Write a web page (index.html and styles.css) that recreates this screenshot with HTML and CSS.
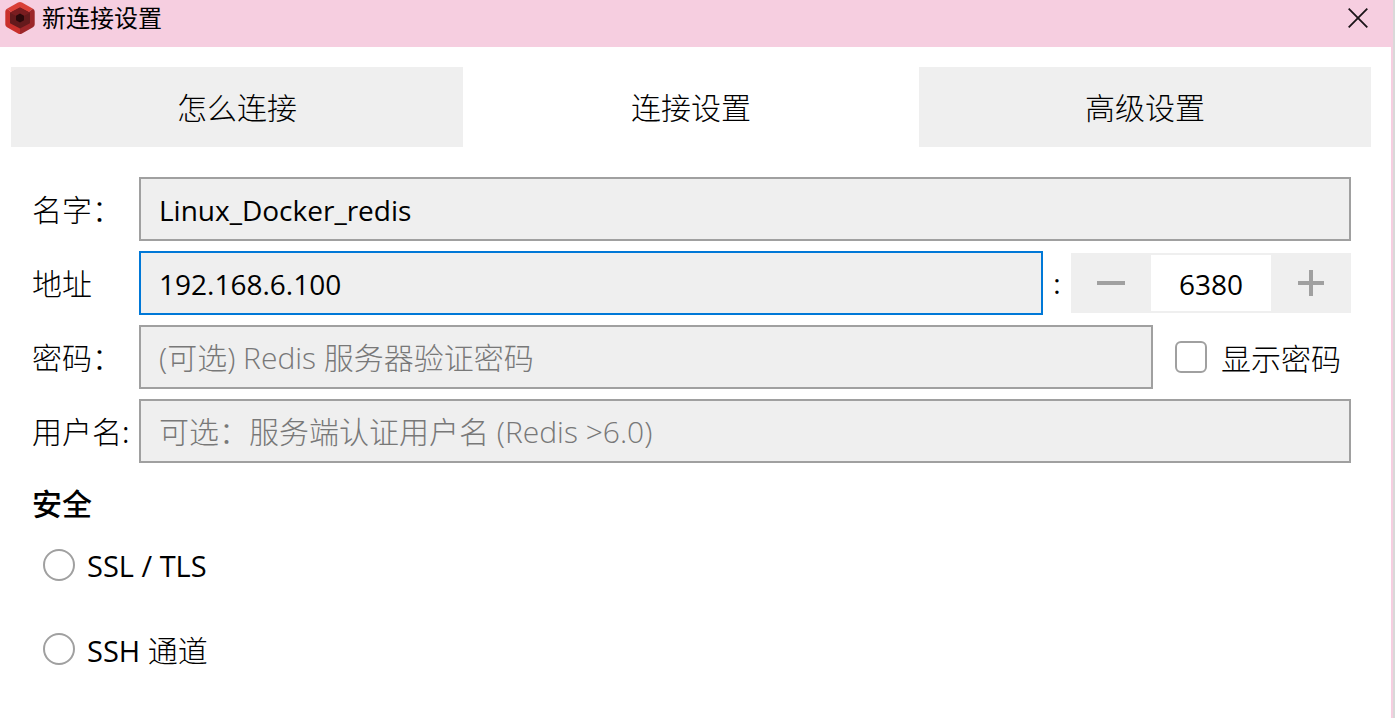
FILE: index.html
```
<!DOCTYPE html>
<html lang="zh-CN">
<head>
<meta charset="utf-8">
<title>新连接设置</title>
<link rel="stylesheet" href="styles.css">
</head>
<body>
<div class="window">
  <header class="titlebar">
    <svg class="logo" viewBox="0 0 30 32" aria-hidden="true">
      <path fill="#d93f37" d="M13 .6Q15-.4 17 .6L28 6.800 15 16 2 6.800Z"/>
      <path fill="#c9302c" d="M2 6.800Q.3 7.800.3 9.500V22.500Q.3 24.200 2 25.200L13 31.400Q14 32 15 32V16Z"/>
      <path fill="#9c2629" d="M28 6.800Q29.700 7.800 29.700 9.500V22.500Q29.700 24.200 28 25.200L17 31.400Q16 32 15 32V16Z"/>
      <path fill="#641a1c" d="M15 5.500 25 10.800V21.200L15 26.500 5 21.200V10.800Z"/>
      <path fill="#7a1d20" d="M15 5.500 25 10.800 15 16 5 10.800Z"/>
      <path fill="#2b090b" d="M15 11.500 19 13.800V18.200L15 20.500 11 18.200V13.800Z"/>
    </svg>
    <h1 class="title">新连接设置</h1>
    <button class="close" type="button" aria-label="关闭">
      <svg viewBox="0 0 20 20" aria-hidden="true"><path d="M.7.7 19.300 19.300M19.300.7.7 19.300" fill="none" stroke="#1a1418" stroke-width="1.800"/></svg>
    </button>
  </header>
  <main class="content">
    <nav class="tabs">
      <button class="tab" type="button">怎么连接</button>
      <button class="tab active" type="button">连接设置</button>
      <button class="tab" type="button">高级设置</button>
    </nav>
    <form class="form">
      <div class="row">
        <label class="label" for="name">名字：</label>
        <input class="field" id="name" type="text" value="Linux_Docker_redis">
      </div>
      <div class="row">
        <label class="label" for="host">地址</label>
        <input class="field focused" id="host" type="text" value="192.168.6.100">
        <span class="colon">:</span>
        <div class="stepper">
          <button class="step" type="button" aria-label="减少"><svg viewBox="0 0 28 28" aria-hidden="true"><path d="M0 14H28" stroke="#a0a0a0" stroke-width="4"/></svg></button>
          <input class="port" type="text" value="6380" aria-label="端口">
          <button class="step" type="button" aria-label="增加"><svg viewBox="0 0 28 28" aria-hidden="true"><path d="M1 14H27M14 1V27" stroke="#a0a0a0" stroke-width="4"/></svg></button>
        </div>
      </div>
      <div class="row">
        <label class="label" for="password">密码：</label>
        <input class="field" id="password" type="text" placeholder="(可选) Redis 服务器验证密码">
        <div class="reveal">
          <input class="check" id="show" type="checkbox">
          <label for="show">显示密码</label>
        </div>
      </div>
      <div class="row">
        <label class="label" for="user">用户名:</label>
        <input class="field" id="user" type="text" placeholder="可选：服务端认证用户名 (Redis &gt;6.0)">
      </div>
      <h2 class="heading">安全</h2>
      <div class="options">
        <div class="option">
          <input class="radio" id="ssl" type="radio" name="security">
          <label for="ssl">SSL / TLS</label>
        </div>
        <div class="option">
          <input class="radio" id="ssh" type="radio" name="security">
          <label for="ssh">SSH <span class="cjk">通道</span></label>
        </div>
      </div>
    </form>
  </main>
</div>
</body>
</html>
```
FILE: styles.css
```
* {
  box-sizing: border-box;
}

body {
  margin: 0;
  background: #fff;
  color: #000;
  font-family: "Open Sans", "Noto Sans CJK SC", sans-serif;
  font-size: 28px;
}

input,
button {
  font: inherit;
  color: inherit;
  margin: 0;
  padding: 0;
  border: 0;
  border-radius: 0;
}

.window {
  display: flex;
  flex-direction: column;
  min-height: 100vh;
  border-right: 2px solid #d9d9d9;
  background: #f6cee0;
}

.titlebar {
  display: flex;
  align-items: flex-start;
  height: 47px;
  padding: 2px 22px 0 5px;
}

.logo {
  width: 30px;
  height: 32px;
}

.title {
  flex: 1;
  margin: 0 0 0 7px;
  font: 400 24px/30px "Noto Sans CJK SC", sans-serif;
}

.close {
  display: flex;
  align-items: center;
  justify-content: center;
  width: 26px;
  height: 32px;
  background: none;
}

.close svg {
  width: 20px;
  height: 20px;
}

.content {
  flex: 1;
  margin-right: 2px;
  padding: 20px 20px 0 11px;
  background: #fff;
}

.tabs {
  display: grid;
  grid-template-columns: repeat(3, 1fr);
  gap: 2px;
}

.tab {
  height: 80px;
  padding-bottom: 2px;
  background: #efefef;
  font: 300 30px/44px "Noto Sans CJK SC", sans-serif;
}

.tab.active {
  background: #fff;
}

.form {
  display: flex;
  flex-direction: column;
  gap: 10px;
  padding: 30px 20px 0 21px;
}

.row {
  display: flex;
  align-items: center;
}

.label {
  flex: none;
  width: 107px;
  padding-bottom: 2px;
  white-space: nowrap;
}

.label,
.reveal,
.cjk {
  font-family: "Noto Sans CJK SC", sans-serif;
  font-size: 30px;
  font-weight: 300;
  line-height: 44px;
}

.field {
  flex: 1;
  min-width: 0;
  height: 64px;
  padding: 2px 18px 0;
  border: 2px solid #a0a0a0;
  background: #efefef;
  outline: none;
}

.field::placeholder {
  color: #787878;
  font-size: 30px;
  font-weight: 300;
  opacity: 1;
}

.field.focused {
  border-color: #0078d7;
}

.colon {
  flex: none;
  width: 28px;
  text-align: center;
}

.stepper {
  display: flex;
  flex: none;
  width: 280px;
  height: 60px;
  padding: 2px 0;
  background: #efefef;
}

.step {
  display: flex;
  flex: 1;
  align-items: center;
  justify-content: center;
  background: #efefef;
}

.step svg {
  width: 28px;
  height: 28px;
}

.port {
  width: 120px;
  padding-top: 2px;
  background: #fff;
  text-align: center;
}

.reveal {
  display: flex;
  flex: none;
  align-items: center;
  gap: 14px;
  width: 198px;
  padding-left: 22px;
  white-space: nowrap;
}

.check,
.radio {
  flex: none;
  width: 32px;
  height: 32px;
  appearance: none;
  border: 2px solid #a0a0a0;
  background: #fff;
}

.check {
  border-radius: 6px;
}

.radio {
  border-radius: 50%;
}

.heading {
  margin: 7px 0 0;
  font: 500 30px/44px "Noto Sans CJK SC", sans-serif;
}

.options {
  display: flex;
  flex-direction: column;
  gap: 40px;
  padding: 9px 0 0 11px;
  font-size: 29px;
}

.option {
  display: flex;
  align-items: center;
  gap: 12px;
  height: 44px;
}
```
